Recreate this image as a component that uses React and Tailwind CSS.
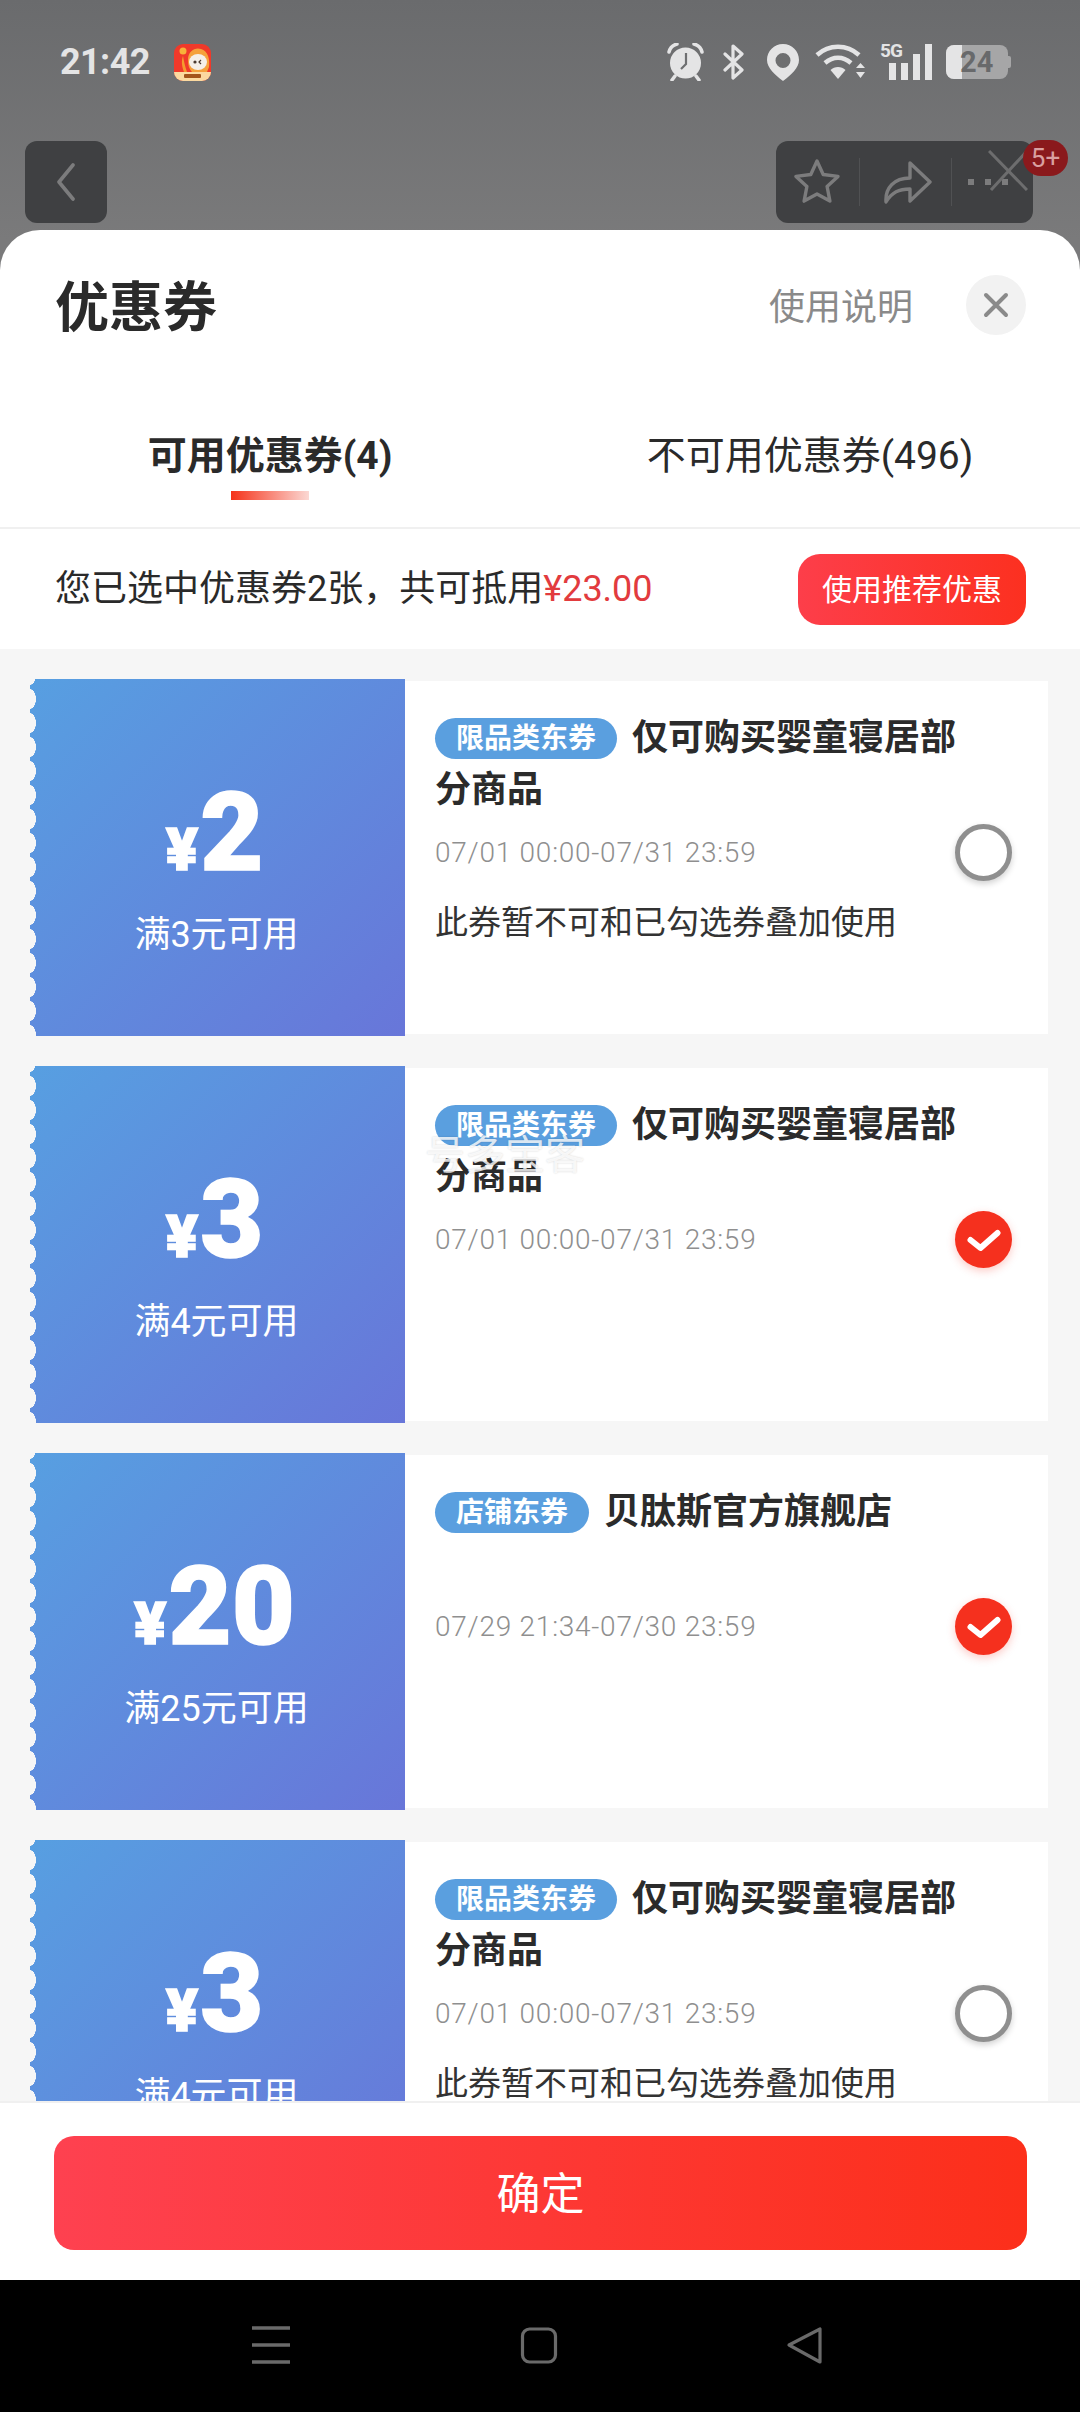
import React from "react";

const FONT = "font-['Roboto','Noto_Sans_CJK_SC',sans-serif]";

function AppIcon() {
  return (
    <svg width="37" height="37" viewBox="0 0 37 37">
      <rect width="37" height="37" rx="9" fill="#f0392a" />
      <path d="M0 28h37a9 9 0 0 1-9 9H9a9 9 0 0 1-9-9z" fill="#fbd9a0" />
      <circle cx="9" cy="7" r="3.5" fill="#f7b13a" />
      <path d="M9 12c-2 5-1 11 1 16h3c-2-5-3-11-4-16z" fill="#f59a2e" />
      <path d="M14 16c0-9 7-13 13-11 7 2 9 10 8 18l-2 5H18c-3-3-4-7-4-12z" fill="#f5a13c" />
      <ellipse cx="24" cy="18" rx="9" ry="8" fill="#f5efe8" />
      <circle cx="21" cy="18" r="1.6" fill="#4a3a30" />
      <path d="M27 16l-2 2 2 2" stroke="#4a3a30" strokeWidth="1.2" fill="none" />
      <rect x="10" y="30" width="17" height="4" rx="1" fill="#a3541c" />
    </svg>
  );
}

function StatusIcons() {
  const c = "#e4e4e5";
  return (
    <div className="flex items-center">
      <svg width="37" height="38" viewBox="0 0 37 38" fill="none">
        <circle cx="18.5" cy="20" r="15.5" fill={c} />
        <path d="M2 9c1-4 4-7 8-8M35 9c-1-4-4-7-8-8" stroke={c} strokeWidth="3.5" strokeLinecap="round" />
        <path d="M8 33l-3 4M29 33l3 4" stroke={c} strokeWidth="3.5" strokeLinecap="round" />
        <path d="M19 10v11l-5 5" stroke="#6e6f71" strokeWidth="2.2" fill="none" />
      </svg>
      <svg className="ml-[19px]" width="21" height="36" viewBox="0 0 21 36" fill="none">
        <path d="M2 10l17 16-9 8V2l9 8L2 26" stroke={c} strokeWidth="3.2" strokeLinejoin="round" strokeLinecap="round" />
      </svg>
      <svg className="ml-[23px]" width="32" height="37" viewBox="0 0 32 37">
        <path fillRule="evenodd" fill={c} d="M16 0C7 0 0 7 0 16c0 8 8 15 16 21 8-6 16-13 16-21C32 7 25 0 16 0zm0 9a7.5 7.5 0 1 1 0 15 7.5 7.5 0 0 1 0-15z" />
      </svg>
      <svg className="ml-[16px]" width="51" height="36" viewBox="0 0 51 36" fill="none">
        <path d="M2 11c12-11 30-11 42 0" stroke={c} strokeWidth="4.5" />
        <path d="M10 19c8-7 18-7 26 0" stroke={c} strokeWidth="4.5" />
        <path d="M15.5 26l7.5 9 7.5-9c-4-4-11-4-15 0z" fill={c} />
        <path d="M41 24l4.5-5 4.5 5zM41 28l4.5 6 4.5-6z" fill={c} />
      </svg>
      <div className="relative ml-[14px] w-[52px] h-[36px]">
        <span className="absolute left-0 top-[-3px] text-[19px] leading-[20px] font-bold tracking-[-0.8px] text-[#e4e4e5]">5G</span>
        <div className="absolute right-0 bottom-0 flex items-end gap-[5px]">
          <div className="w-[7px] h-[17px] bg-[#e4e4e5]" />
          <div className="w-[7px] h-[17px] bg-[#e4e4e5]" />
          <div className="w-[7px] h-[26px] bg-[#e4e4e5]" />
          <div className="w-[7px] h-[36px] bg-[#e4e4e5]" />
        </div>
      </div>
      <div className="relative ml-[14px] w-[66px] h-[34px] flex items-center">
        <div className="relative w-[62px] h-[34px] rounded-[8px] bg-[#a6a6a7] overflow-hidden">
          <div className="absolute left-0 top-0 bottom-0 w-[16px] bg-[#e4e4e5]" />
          <span className="absolute inset-0 pl-[14px] text-[29px] leading-[34px] font-bold text-[#68696b]">24</span>
        </div>
        <div className="w-[3px] h-[12px] bg-[#a6a6a7] rounded-r-[2px]" />
      </div>
    </div>
  );
}

function TopBar() {
  const g = "#7c7c7d";
  return (
    <div className="h-[230px] shrink-0 flex flex-col">
      <div className="flex items-center justify-between pt-[43px] pl-[60px] pr-[68px]">
        <div className="flex items-center">
          <span className="w-[90px] text-[36px] leading-[38px] font-bold text-[#e4e4e5] tracking-[-0.6px]">21:42</span>
          <div className="ml-[24px]"><AppIcon /></div>
        </div>
        <StatusIcons />
      </div>
      <div className="mt-[60px] pl-[25px] pr-[47px] flex justify-between">
        <div className="w-[82px] h-[82px] rounded-[12px] bg-[#3f4042] flex items-center justify-center">
          <svg width="20" height="38" viewBox="0 0 20 38" fill="none">
            <path d="M17 2L3 19l14 17" stroke={g} strokeWidth="3.6" strokeLinecap="round" strokeLinejoin="round" />
          </svg>
        </div>
        <div className="relative w-[257px] h-[82px] rounded-[12px] bg-[#3f4042] flex items-center">
          <svg className="ml-[18px]" width="46" height="46" viewBox="0 0 46 46" fill="none">
            <path d="M23 2l6.2 13.5 14.8 1.9-10.9 10.1 2.8 14.6L23 35l-12.9 7.1 2.8-14.6L2 17.4l14.8-1.9z" stroke={g} strokeWidth="3.4" strokeLinejoin="round" />
          </svg>
          <div className="ml-[19px] w-px h-[48px] bg-[#505153]" />
          <svg className="ml-[24px]" width="48" height="44" viewBox="0 0 48 44" fill="none">
            <path d="M2 42c-1-14 8-24 24-24V3l20 19-20 19V29C15 29 8 32 2 42z" stroke={g} strokeWidth="3.4" strokeLinejoin="round" />
          </svg>
          <div className="ml-[19px] w-px h-[48px] bg-[#505153]" />
          <div className="ml-[16px] flex gap-[11px]">
            <div className="w-[6px] h-[6px] bg-[#7c7c7d]" />
            <div className="w-[6px] h-[6px] bg-[#7c7c7d]" />
            <div className="w-[6px] h-[6px] bg-[#7c7c7d]" />
          </div>
          <svg className="absolute left-[212px] top-[9px]" width="40" height="41" viewBox="0 0 40 41" fill="none">
            <path d="M1 1l38 39M39 1L3 40" stroke="#6d6d6e" strokeWidth="3" />
          </svg>
          <div className="absolute left-[247px] top-[-1px] w-[45px] h-[36px] rounded-full bg-[#8a191c] flex items-center justify-center text-[26px] leading-[36px] text-[#d9a0a0]">5+</div>
        </div>
      </div>
    </div>
  );
}

function Radio({ on }) {
  if (on) {
    return (
      <div className="w-[57px] h-[57px] rounded-full bg-[#f5301e] shadow-[0_3px_8px_rgba(245,48,30,0.25)] flex items-center justify-center shrink-0">
        <svg width="34" height="26" viewBox="0 0 34 26" fill="none">
          <path d="M3.5 13l10 8L30.5 6" stroke="#fff" strokeWidth="6" strokeLinecap="round" strokeLinejoin="round" />
        </svg>
      </div>
    );
  }
  return <div className="w-[57px] h-[57px] rounded-full border-[5px] border-[#8f8f8f] bg-white shadow-[0_3px_6px_rgba(0,0,0,0.18)] shrink-0" />;
}

function Coupon({ amount, cond, tag, title, date, on, note, mark }) {
  return (
    <div className="relative flex h-[357px] shrink-0">
      <div className="relative w-[375px] shrink-0 bg-[linear-gradient(135deg,#579fe1,#6876d9)] flex flex-col items-center pt-[104px] text-white">
        <div className="absolute left-0 top-0 bottom-0 w-[8px] bg-[radial-gradient(ellipse_6px_10px_at_0_50%,#f6f6f6_96%,transparent_100%)] bg-[length:8px_24px] bg-[position:0_8px] bg-repeat-y" />
        <div className="flex items-baseline h-[100px] leading-[100px] font-black -translate-x-[3px] [-webkit-text-stroke:1.5px_white]">
          <span className="text-[60px] mr-[2px]">¥</span>
          <span className="text-[109px]">{amount}</span>
        </div>
        <div className="mt-[27px] -translate-x-[1px] text-[36px] leading-[50px]">{cond}</div>
      </div>
      <div className="flex-1 my-[2px] bg-white pl-[30px] pr-[36px] pt-[31px]">
        <div className="h-[104px] w-[540px] text-[36px] leading-[52px] font-bold text-[#2b2b2b]">
          <span className="inline-flex items-center h-[41px] align-top mt-[6px] mr-[15px] px-[21px] rounded-full bg-[#5a9fdf] text-[28px] leading-[41px] font-bold text-white">{tag}</span>
          {title}
        </div>
        <div className="mt-[8px] flex items-center justify-between">
          <span className="text-[28px] leading-[40px] font-light tracking-[0.75px] text-[#8f8f8f]">{date}</span>
          <Radio on={on} />
        </div>
        {note && <div className="mt-[20px] text-[33px] leading-[44px] text-[#333]">{note}</div>}
      </div>
      {mark && <div className="absolute left-[395px] top-[70px] text-[40px] leading-[40px] text-white/80 [text-shadow:0_0_2px_rgba(0,0,0,0.18)]">号多宝客</div>}
    </div>
  );
}

const LONG = "仅可购买婴童寝居部分商品";
const NOTE = "此券暂不可和已勾选券叠加使用";

export default function App() {
  return (
    <div className={`w-[1080px] h-[2412px] flex flex-col overflow-hidden bg-[linear-gradient(180deg,#6a6b6d,#7a7a7b_240px)] ${FONT}`}>
      <TopBar />
      <div className="flex-1 min-h-0 flex flex-col rounded-t-[40px] bg-white overflow-hidden">
        <div className="h-[105px] shrink-0 flex items-start justify-between pl-[55px] pr-[54px]">
          <span className="mt-[49px] text-[54px] leading-[60px] font-bold text-[#2a2a2a]">优惠券</span>
          <div className="flex items-start">
            <span className="mt-[53px] text-[36px] leading-[50px] text-[#8a8a8a]">使用说明</span>
            <div className="mt-[45px] ml-[53px] w-[60px] h-[60px] rounded-full bg-[#f2f2f2] flex items-center justify-center">
              <svg width="26" height="26" viewBox="0 0 26 26" fill="none">
                <path d="M3 3l20 20M23 3L3 23" stroke="#8a8a8a" strokeWidth="4" strokeLinecap="round" />
              </svg>
            </div>
          </div>
        </div>
        <div className="mt-[96px] grid grid-cols-2 h-[98px] shrink-0 border-b-2 border-[#f0f0f0]">
          <div className="flex flex-col items-center">
            <span className="text-[39px] leading-[50px] font-bold text-[#2a2a2a]">可用优惠券(4)</span>
            <div className="mt-[10px] w-[78px] h-[9px] bg-[linear-gradient(90deg,#f5331a,#fbd8d3)]" />
          </div>
          <div className="flex justify-center">
            <span className="text-[39px] leading-[50px] text-[#2a2a2a]">不可用优惠券(496)</span>
          </div>
        </div>
        <div className="h-[120px] shrink-0 flex items-center justify-between pl-[55px] pr-[54px]">
          <span className="text-[36px] leading-[50px] text-[#2a2a2a]">您已选中优惠券2张，共可抵用<span className="text-[#e23b3e]">¥23.00</span></span>
          <div className="w-[228px] h-[71px] rounded-[22px] bg-[linear-gradient(90deg,#fd3e4a,#fc3020)] flex items-center justify-center text-[30px] text-white">使用推荐优惠</div>
        </div>
        <div className="flex-1 min-h-0 overflow-hidden bg-[#f6f6f6] pt-[30px] pl-[30px] pr-[32px] flex flex-col gap-[30px]">
          <Coupon amount="2" cond="满3元可用" tag="限品类东券" title={LONG} date="07/01 00:00-07/31 23:59" note={NOTE} />
          <Coupon amount="3" cond="满4元可用" tag="限品类东券" title={LONG} date="07/01 00:00-07/31 23:59" on mark />
          <Coupon amount="20" cond="满25元可用" tag="店铺东券" title="贝肽斯官方旗舰店" date="07/29 21:34-07/30 23:59" on />
          <Coupon amount="3" cond="满4元可用" tag="限品类东券" title={LONG} date="07/01 00:00-07/31 23:59" note={NOTE} />
        </div>
        <div className="h-[179px] shrink-0 border-t-2 border-[#f0f0f0] bg-white pt-[33px] pl-[54px] pr-[53px]">
          <div className="h-[114px] pt-[3px] rounded-[20px] bg-[linear-gradient(90deg,#fe4150,#fc2f1a)] flex items-center justify-center text-[44px] text-white">确定</div>
        </div>
      </div>
      <div className="h-[132px] shrink-0 bg-black flex items-center justify-center relative">
        <svg width="1080" height="132" viewBox="0 0 1080 132" fill="none">
          <path d="M252 48h38M252 65h38M252 82h38" stroke="#6a6a6a" strokeWidth="3.4" />
          <rect x="522.5" y="49" width="33" height="33" rx="7" stroke="#6a6a6a" strokeWidth="3.2" />
          <path d="M820 49v33L789 65z" stroke="#6a6a6a" strokeWidth="3.2" strokeLinejoin="round" />
        </svg>
      </div>
    </div>
  );
}
